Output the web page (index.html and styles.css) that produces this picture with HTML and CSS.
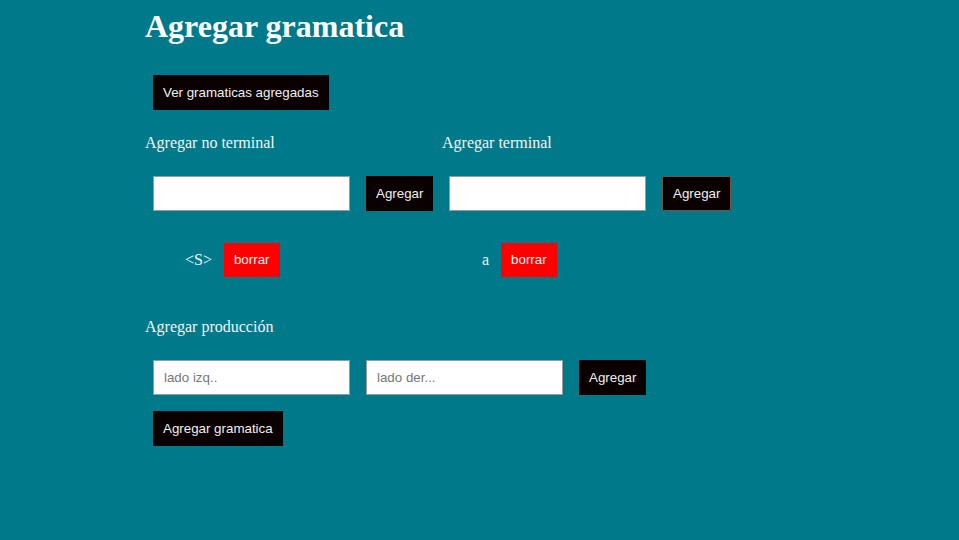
FILE: index.html
```html
<!DOCTYPE html>
<html lang="es">
<head>
<meta charset="utf-8">
<title>Agregar gramatica</title>
<link rel="stylesheet" href="styles.css">
</head>
<body>
<main class="page">
  <h1 class="title">Agregar gramatica</h1>
  <button class="btn">Ver gramaticas agregadas</button>

  <div class="cols">
    <section class="col col-first">
      <p class="label">Agregar no terminal</p>
      <div class="row">
        <input class="field" type="text">
        <button class="btn">Agregar</button>
      </div>
      <ul class="list">
        <li class="item"><span class="sym">&lt;S&gt;</span><button class="btn btn-red">borrar</button></li>
      </ul>
    </section>
    <section class="col col-second">
      <p class="label">Agregar terminal</p>
      <div class="row">
        <input class="field" type="text">
        <button class="btn btn-focus">Agregar</button>
      </div>
      <ul class="list">
        <li class="item"><span class="sym">a</span><button class="btn btn-red">borrar</button></li>
      </ul>
    </section>
  </div>

  <p class="label label-prod">Agregar producción</p>
  <div class="row">
    <input class="field" type="text" placeholder="lado izq..">
    <input class="field" type="text" placeholder="lado der...">
    <button class="btn">Agregar</button>
  </div>
  <button class="btn">Agregar gramatica</button>
</main>
</body>
</html>
```
FILE: styles.css
```css
html, body {
  margin: 0;
  padding: 0;
  background: #007a8b;
}
body {
  font-family: "Liberation Serif", serif;
  color: #f2f5f5;
}
.page {
  padding: 8px 0 0 145px;
}
.title {
  margin: 0 0 22px 0;
  font-size: 32px;
  font-weight: bold;
  color: #ffffff;
  line-height: 37px;
}
.btn {
  display: inline-block;
  margin: 8px;
  padding: 10px;
  height: 35px;
  border: 0;
  border-radius: 0;
  background: #0a0000;
  color: #f0f0f0;
  font-family: "Liberation Sans", Arial, sans-serif;
  font-size: 13.333px;
  line-height: 15px;
  cursor: pointer;
}
.btn-focus {
  border: 1px solid #7a5040;
  border-radius: 2px;
  padding: 9px 10px;
}
.btn-red {
  background: #ff0000;
  height: 34px;
  padding: 9px 10px 10px;
}
.cols {
  display: flex;
}
.col-first {
  width: 297px;
}
.col-second .row {
  margin-left: -1px;
}
.label {
  margin: 16px 0 16px 0;
  font-size: 16px;
  line-height: 18px;
}
.row {
  display: flex;
  align-items: center;
}
.field {
  box-sizing: border-box;
  width: 197px;
  height: 35px;
  margin: 8px;
  padding: 0 10px;
  border: 1px solid #9a9a9a;
  background: #ffffff;
  font-family: "Liberation Sans", Arial, sans-serif;
  font-size: 13.333px;
  color: #333;
}
.field::placeholder {
  color: #777;
}
.list {
  list-style: none;
  margin: 16px 0 0 0;
  padding: 0 0 0 40px;
}
.item {
  display: flex;
  align-items: center;
}
.sym {
  font-size: 16px;
  margin-right: 4px;
}
.label-prod {
  margin-top: 33px;
}
```
